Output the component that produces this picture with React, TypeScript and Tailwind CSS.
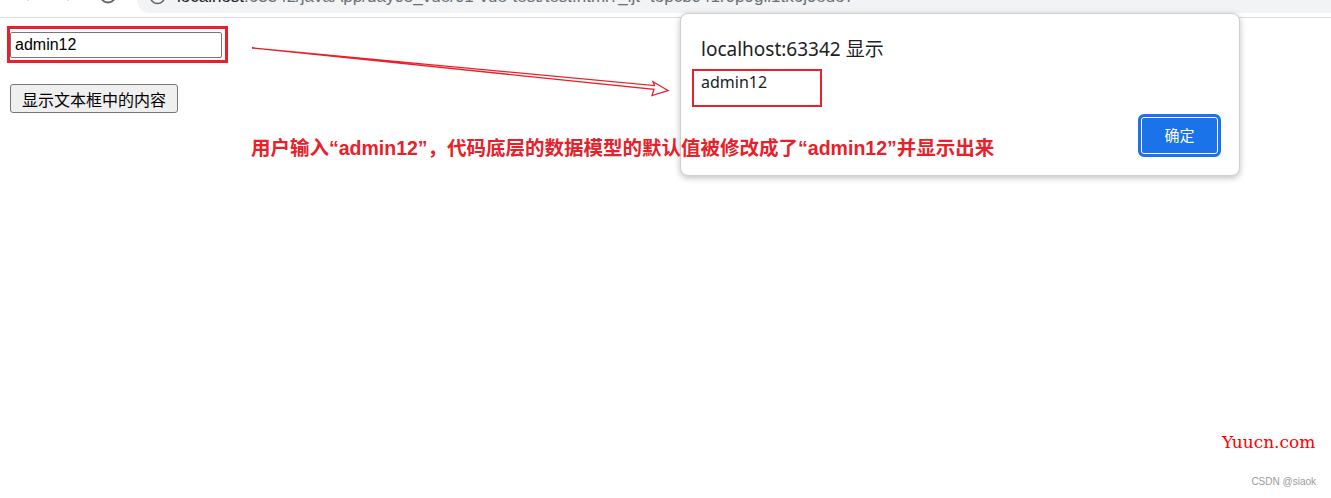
import { ArrowLeft, ArrowRight, RotateCw, Info } from "lucide-react";

const cjk = "font-['Liberation_Sans','Noto_Sans_CJK_SC',sans-serif]";

function BrowserStrip() {
    return (
        <div className="flex h-[18px] items-start overflow-hidden border-b border-[#dadce0] bg-white">
            {/* nav buttons, only the lower part shows */}
            <div className="flex w-[137px] shrink-0 items-start">
                <ArrowLeft size={20} strokeWidth={2} className="ml-[18px] mt-[-16px] text-[#c4c7c9]" />
                <ArrowRight size={20} strokeWidth={2} className="ml-[20px] mt-[-16px] text-[#c4c7c9]" />
                <RotateCw size={20} strokeWidth={2.2} className="ml-[20px] mt-[-15px] text-[#5f6368]" />
            </div>
            <div className="flex h-[13px] flex-1 items-start rounded-bl-[14px] bg-[#f1f3f4]">
                <Info size={17} strokeWidth={2.2} className="ml-[12px] mt-[-12px] text-[#5f6368]" />
                <div className="ml-[11px] mt-[-12px] whitespace-nowrap font-['Liberation_Sans',sans-serif] text-[17px] leading-none">
                    <span className="text-[#202124]">localhost</span>
                    <span className="text-[#6b6f73]">:63342/javaApp/day05_vue/01-vue-test/test.html?_ijt=topcb041r0p9gil1tk6j9euo7</span>
                </div>
            </div>
        </div>
    );
}

function AlertDialog() {
    return (
        <div className="absolute left-[680px] top-[13px] flex h-[163px] w-[560px] flex-col rounded-[8px] border border-[#cfcfcf] bg-white px-[20px] pt-[23px] pb-[18px] shadow-[0_2px_6px_rgba(0,0,0,0.25)]">
            <div className="font-['Noto_Sans','Noto_Sans_CJK_SC',sans-serif] text-[19px] leading-[24px] text-[#202124]">
                localhost:63342 显示
            </div>
            <div className="mt-[11px] font-['Noto_Sans',sans-serif] text-[16px] leading-[20px] text-[#202124]">
                admin12
            </div>
            <div className="mt-auto flex justify-end">
                <button className="mr-[-2px] h-[43px] w-[83px] rounded-[6px] border-[3px] border-[#1a73e8] bg-[#1a73e8] font-['Noto_Sans_CJK_SC',sans-serif] text-[15px] text-white shadow-[inset_0_0_0_1px_#ffffff]">
                    确定
                </button>
            </div>
        </div>
    );
}

export default function App() {
    return (
        <div className="relative h-[498px] w-full overflow-hidden bg-white">
            <BrowserStrip />

            <div className="flex flex-col items-start pl-[10px]">
                <input
                    readOnly
                    value="admin12"
                    className="mt-[14px] h-[26px] w-[212px] rounded-[2px] border border-[#767676] bg-white px-[4px] font-['Liberation_Sans',sans-serif] text-[16px] text-black outline-none"
                />
                <button className="mt-[26px] flex h-[29px] w-[168px] items-center justify-center rounded-[3px] border border-[#767676] bg-[#efefef] font-['Noto_Sans_CJK_SC',sans-serif] text-[16px] text-black">
                    显示文本框中的内容
                </button>
            </div>

            {/* red marker round the input */}
            <div className="absolute left-[7px] top-[26px] h-[37px] w-[221px] border-[3px] border-[#e8202a]" />

            <AlertDialog />

            {/* red marker round the alert text */}
            <div className="absolute left-[692px] top-[69px] h-[38px] w-[130px] border-2 border-[#e8202a]" />

            {/* hollow arrow */}
            <svg className="absolute left-0 top-0" width="700" height="110" viewBox="0 0 700 110">
                <polygon
                    points="252,48 654.5,85.6 653,81.8 668,90.5 652,95.5 654,89.3"
                    fill="white"
                    stroke="#e8202a"
                    strokeWidth="1.3"
                    strokeLinejoin="miter"
                />
            </svg>

            <div className={`absolute left-[251px] top-[135px] whitespace-nowrap ${cjk} text-[19.5px] font-bold leading-[26px] text-[#e8202a]`}>
                用户输入“admin12”，代码底层的数据模型的默认值被修改成了“admin12”并显示出来
            </div>

            <div className="absolute left-[1222px] top-[431px] font-['DejaVu_Serif',serif] text-[17px] leading-[22px] text-[#ff0000]">
                Yuucn.com
            </div>
            <div className="absolute right-[15px] top-[476px] font-['Liberation_Sans',sans-serif] text-[10px] leading-[12px] text-[#9a9a9a]">
                CSDN @siaok
            </div>
        </div>
    );
}
